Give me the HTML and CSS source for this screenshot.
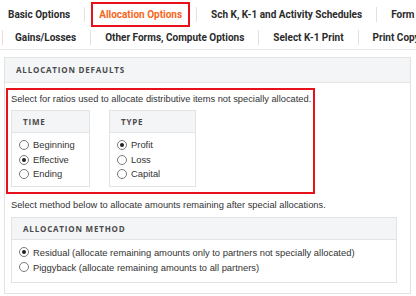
FILE: index.html
```html
<!DOCTYPE html>
<html lang="en">
<head>
  <meta charset="UTF-8">
  <meta name="viewport" content="width=device-width, initial-scale=1.0">
  <title>Allocation Options</title>
  <link rel="stylesheet" href="styles.css">
</head>
<body>
  <nav class="tabs">
    <div class="tab-row">
      <a class="tab" href="#">Basic Options</a>
      <span class="sep"></span>
      <a class="tab active" href="#">Allocation Options</a>
      <span class="sep"></span>
      <a class="tab" href="#">Sch K, K-1 and Activity Schedules</a>
      <span class="sep"></span>
      <a class="tab" href="#">Form 1065 Options</a>
    </div>
    <div class="tab-row second">
      <span class="sep faint"></span>
      <a class="tab" href="#">Gains/Losses</a>
      <span class="sep"></span>
      <a class="tab" href="#">Other Forms, Compute Options</a>
      <span class="sep"></span>
      <a class="tab" href="#">Select K-1 Print</a>
      <span class="sep"></span>
      <a class="tab" href="#">Print Copy</a>
    </div>
  </nav>

  <section class="panel">
    <h2 class="panel-head">Allocation Defaults</h2>
    <div class="panel-body">
      <div class="highlight">
        <p class="note">Select for ratios used to allocate distributive items not specially allocated.</p>
        <div class="groups">
          <div class="group time">
            <h3 class="group-head">Time</h3>
            <div class="options">
              <label><input type="radio" name="time"> Beginning</label>
              <label><input type="radio" name="time" checked> Effective</label>
              <label><input type="radio" name="time"> Ending</label>
            </div>
          </div>
          <div class="group type">
            <h3 class="group-head">Type</h3>
            <div class="options">
              <label><input type="radio" name="type" checked> Profit</label>
              <label><input type="radio" name="type"> Loss</label>
              <label><input type="radio" name="type"> Capital</label>
            </div>
          </div>
        </div>
      </div>

      <div class="method">
        <p class="note">Select method below to allocate amounts remaining after special allocations.</p>
        <div class="group wide">
          <h3 class="group-head">Allocation Method</h3>
          <div class="options">
            <label><input type="radio" name="method" checked> Residual (allocate remaining amounts only to partners not specially allocated)</label>
            <label><input type="radio" name="method"> Piggyback (allocate remaining amounts to all partners)</label>
          </div>
        </div>
      </div>
    </div>
  </section>
</body>
</html>
```

FILE: styles.css
```css
* {
  margin: 0;
  padding: 0;
  box-sizing: border-box;
}
body {
  background: #fff;
  font-family: "Liberation Sans", Arial, sans-serif;
  color: #333;
  width: 416px;
  overflow: hidden;
}
.tabs {
  border-bottom: 1px solid #e6e6e6;
  padding-top: 2px;
  height: 50px;
}
.tab-row {
  display: flex;
  align-items: center;
  white-space: nowrap;
  overflow: hidden;
}
.tab-row.second {
  margin-top: -2px;
}
.tab {
  display: block;
  flex: none;
  padding: 2px 6px;
  line-height: 17px;
  border: 2px solid transparent;
  font-family: Roboto, "Liberation Sans", sans-serif;
  font-weight: 700;
  font-size: 10px;
  color: #2b2b2b;
  text-decoration: none;
}
.tab.active {
  border-color: #e8111a;
  color: #f7661b;
}
.sep {
  flex: none;
  width: 1px;
  height: 15px;
  margin: 0 6px;
  background: #e2e2e2;
}
.sep.faint {
  margin: 0 4px 0 2px;
  background: #f5d9d9;
}
.panel {
  margin: 7px 5px 0 4px;
  border: 1px solid #e3e3e3;
}
.panel-head,
.group-head {
  font-family: "Open Sans", "Liberation Sans", sans-serif;
  font-weight: 700;
  font-size: 8px;
  letter-spacing: 0.8px;
  text-transform: uppercase;
  color: #4a4a4a;
  background: #f4f5f7;
  border-bottom: 1px solid #e4e4e4;
}
.panel-head {
  height: 25px;
  line-height: 24px;
  padding-left: 11px;
}
.panel-body {
  padding: 5px 0 10px 1px;
}
.highlight {
  width: 309px;
  border: 2px solid #e8111a;
  padding: 2px 3px 5px;
}
.note {
  font-size: 9.3px;
  line-height: 14px;
  color: #333;
  white-space: nowrap;
}
.groups {
  display: flex;
  gap: 19px;
  margin-top: 4px;
}
.group {
  border: 1px solid #e3e3e3;
}
.group.time {
  width: 79px;
}
.group.type {
  width: 87px;
}
.group-head {
  height: 22px;
  line-height: 21px;
  padding-left: 11px;
}
.options {
  display: flex;
  flex-direction: column;
  padding: 5px 0 4px 7px;
}
.options label {
  display: flex;
  align-items: center;
  font-size: 9.4px;
  line-height: 14.5px;
  color: #333;
}
.options input {
  appearance: none;
  -webkit-appearance: none;
  flex: none;
  width: 10px;
  height: 10px;
  margin-right: 4px;
  border: 1px solid #7a7a7a;
  border-radius: 50%;
  background: #fff;
  display: flex;
  align-items: center;
  justify-content: center;
}
.options input:checked::after {
  content: "";
  width: 4px;
  height: 4px;
  border-radius: 50%;
  background: #222;
}
.method {
  padding: 4px 13px 0 5px;
}
.method .group {
  margin-top: 5px;
}
.method .options {
  padding: 5px 0 7px 7px;
}
.method .options label {
  line-height: 15px;
}
```
